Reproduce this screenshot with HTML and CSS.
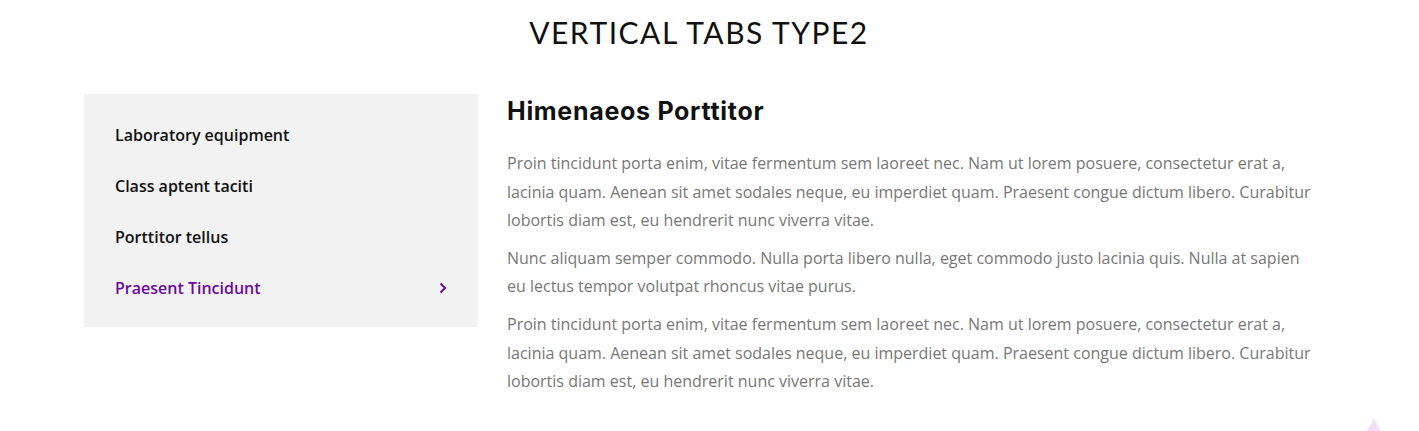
FILE: index.html
```html
<!DOCTYPE html>
<html>
<head>
<meta charset="utf-8">
<link rel="stylesheet" href="styles.css">
</head>
<body>
<section class="page">
  <h2 class="title">VERTICAL TABS TYPE2</h2>
  <div class="tabs">
    <ul class="tab-list">
      <li class="tab">Laboratory equipment</li>
      <li class="tab">Class aptent taciti</li>
      <li class="tab">Porttitor tellus</li>
      <li class="tab active">Praesent Tincidunt
        <svg class="chev" width="8" height="12" viewBox="0 0 8 12"><path d="M1.5 1.5 L6 6 L1.5 10.5" fill="none" stroke="#6a0b9c" stroke-width="2"/></svg>
      </li>
    </ul>
    <div class="panel">
      <h3 class="panel-title">Himenaeos Porttitor</h3>
      <p>Proin tincidunt porta enim, vitae fermentum sem laoreet nec. Nam ut lorem posuere, consectetur erat a, lacinia quam. Aenean sit amet sodales neque, eu imperdiet quam. Praesent congue dictum libero. Curabitur lobortis diam est, eu hendrerit nunc viverra vitae.</p>
      <p>Nunc aliquam semper commodo. Nulla porta libero nulla, eget commodo justo lacinia quis. Nulla at sapien eu lectus tempor volutpat rhoncus vitae purus.</p>
      <p>Proin tincidunt porta enim, vitae fermentum sem laoreet nec. Nam ut lorem posuere, consectetur erat a, lacinia quam. Aenean sit amet sodales neque, eu imperdiet quam. Praesent congue dictum libero. Curabitur lobortis diam est, eu hendrerit nunc viverra vitae.</p>
    </div>
  </div>
</section>
<div class="to-top"></div>
</body>
</html>
```
FILE: styles.css
```css
html, body {
  margin: 0;
  padding: 0;
  background: #fff;
}
body {
  font-family: "Open Sans", "Noto Sans", sans-serif;
  overflow: hidden;
}
.page {
  width: 1251px;
  margin: 0 auto;
}
.title {
  margin: 0;
  padding: 13px 21px 0 0;
  text-align: center;
  font-family: "Lato", "Noto Sans", sans-serif;
  font-weight: 400;
  font-size: 30px;
  line-height: 38px;
  letter-spacing: 1.5px;
  color: #111;
}
.tabs {
  display: flex;
  gap: 29px;
  margin-top: 43px;
  align-items: flex-start;
}
.tab-list {
  list-style: none;
  margin: 0;
  padding: 15px 0 14px 0;
  width: 394px;
  flex: none;
  background: #f2f2f2;
}
.tab {
  display: flex;
  justify-content: space-between;
  align-items: center;
  padding: 0 31px 0 31px;
  height: 51px;
  font-size: 16px;
  font-weight: 600;
  color: #111;
}
.tab.active {
  color: #6a0b9c;
}
.chev {
  display: block;
}
.panel {
  flex: 1;
  padding-right: 15px;
}
.panel-title {
  margin: 2px 0 23px;
  font-family: "Inter", "Noto Sans", sans-serif;
  font-weight: 700;
  font-size: 25px;
  line-height: 30px;
  letter-spacing: 0.7px;
  color: #111;
}
.panel p {
  margin: 0 0 9px;
  font-size: 16px;
  line-height: 28.6px;
  color: #777;
}
.to-top {
  position: fixed;
  right: 38px;
  bottom: 0;
  width: 0;
  height: 0;
  border-left: 7px solid transparent;
  border-right: 7px solid transparent;
  border-bottom: 12px solid #f2def7;
}
```
